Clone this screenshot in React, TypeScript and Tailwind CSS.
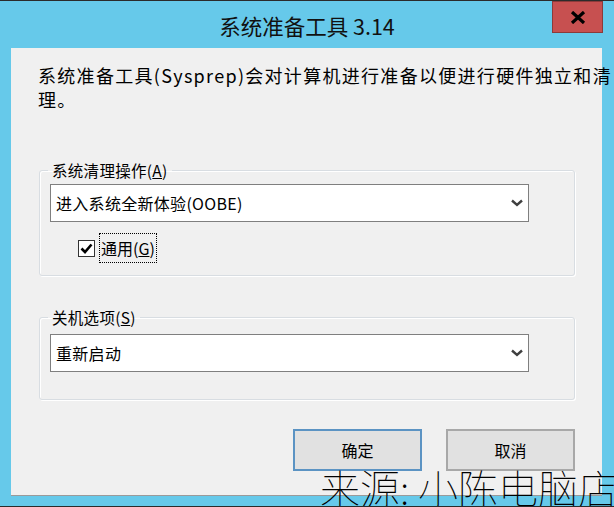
import React from 'react';

const font = { fontFamily: '"Noto Sans CJK SC", "Noto Sans", sans-serif' };

function Chevron() {
  return (
    <svg width="12" height="8" viewBox="0 0 12 8" className="shrink-0">
      <path d="M1 1.5 L6 6 L11 1.5" fill="none" stroke="#404040" strokeWidth="2.4" />
    </svg>
  );
}

function Select({ value }: { value: string }) {
  return (
    <div className="ml-[10px] flex h-[38px] w-[479px] items-center justify-between border border-[#7f7f7f] bg-white pl-[5px] pr-[5px] text-[16px] tracking-[0.3px] text-black">
      <span>{value}</span>
      <Chevron />
    </div>
  );
}

function Button({ label, primary }: { label: string; primary?: boolean }) {
  return (
    <div
      className={`flex h-[42px] w-[129px] items-center justify-center bg-[#e1e1e1] text-[16px] text-black ${
        primary ? 'border-2 border-[#5b93c3]' : 'border-2 border-[#a8a8a8]'
      }`}
    >
      {label}
    </div>
  );
}

export default function App() {
  return (
    <div
      className="relative flex h-[507px] w-[614px] flex-col overflow-hidden border-y border-[#2b2b2b] bg-[#66c9ea]"
      style={font}
    >
      {/* title bar */}
      <div className="grid h-[47px] grid-cols-[62px_1fr_62px]">
        <div />
        <div className="pt-[10px] text-center text-[21.5px] leading-[30px] text-[#111]">系统准备工具 3.14</div>
        <div className="flex justify-start">
          <div className="flex h-[32px] w-[51px] items-center justify-center border border-[#8c3a3a] bg-[#c75050]">
            <svg width="16" height="13" viewBox="0 0 16 13">
              <path d="M2 1 L14 12 M14 1 L2 12" stroke="#000" strokeWidth="3.2" />
            </svg>
          </div>
        </div>
      </div>

      {/* client area */}
      <div className="ml-[11px] mr-[12px] flex h-[447px] flex-col bg-[#f0f0f0]">
        <p className="whitespace-nowrap pl-[27px] pt-[15px] text-[18px] leading-[24px] tracking-[1.3px] text-black">
          系统准备工具(Sysprep)会对计算机进行准备以便进行硬件独立和清
          <br />
          理。
        </p>

        <fieldset className="ml-[28px] mt-[49px] w-[536px] rounded-[3px] border border-[#d8dde2] px-0 pb-[12px] shadow-[inset_1px_1px_0_#ffffff,1px_1px_0_#ffffff]">
          <legend className="ml-[8px] px-[4px] text-[15.5px] leading-[20px] tracking-[0.3px] text-black">
            系统清理操作(<span className="underline">A</span>)
          </legend>
          <div className="mt-[4px]">
            <Select value="进入系统全新体验(OOBE)" />
          </div>
          <div className="ml-[38px] mt-[11px] flex h-[30px] items-center">
            <div className="flex h-[17px] w-[17px] items-center justify-center border border-[#333] bg-white">
              <svg width="13" height="11" viewBox="0 0 13 11">
                <path d="M1.5 5.5 L5 9 L11.5 1.5" fill="none" stroke="#000" strokeWidth="2.6" />
              </svg>
            </div>
            <div className="ml-[4px] flex h-[30px] items-center border border-dotted border-black px-[1px] text-[16px] text-black">
              通用(<span className="underline">G</span>)
            </div>
          </div>
        </fieldset>

        <fieldset className="ml-[28px] mt-[31px] w-[536px] rounded-[3px] border border-[#d8dde2] px-0 pb-[27px] shadow-[inset_1px_1px_0_#ffffff,1px_1px_0_#ffffff]">
          <legend className="ml-[8px] px-[4px] text-[15.5px] leading-[20px] tracking-[0.3px] text-black">
            关机选项(<span className="underline">S</span>)
          </legend>
          <div className="mt-[7px]">
            <Select value="重新启动" />
          </div>
        </fieldset>

        <div className="mt-[29px] flex justify-end gap-[24px] pr-[27px]">
          <Button label="确定" primary />
          <Button label="取消" />
        </div>
      </div>
      <div className="ml-[11px] mr-[12px] h-px bg-[#9a9a9a]" />

      {/* watermark */}
      <div className="absolute left-[320px] top-[466px] whitespace-nowrap text-[40px] font-thin leading-none text-black">
        来源: 小陈电脑店
      </div>
    </div>
  );
}
